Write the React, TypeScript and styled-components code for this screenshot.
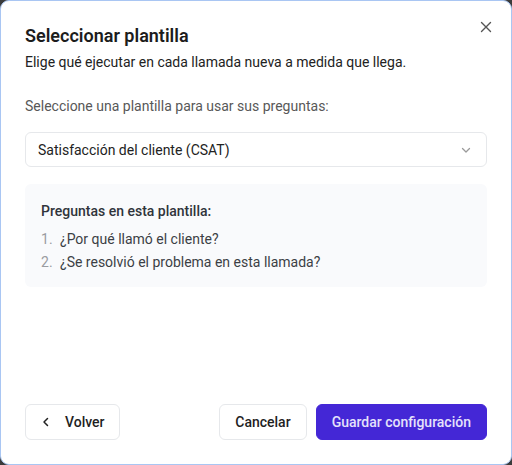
import styled, { createGlobalStyle } from 'styled-components';

const GlobalStyle = createGlobalStyle`
  html, body {
    margin: 0;
    padding: 0;
    background: #3b3b3b;
  }
  * {
    box-sizing: border-box;
  }
`;

const questions = ['¿Por qué llamó el cliente?', '¿Se resolvió el problema en esta llamada?'];

function App() {
  return (
    <>
      <GlobalStyle />
      <Dialog>
        <CloseButton aria-label="Cerrar">
          <svg width="12" height="12" viewBox="0 0 12 12" fill="none">
            <path d="M1.5 1.5l9 9M10.5 1.5l-9 9" stroke="#555" strokeWidth="1.4" strokeLinecap="round" />
          </svg>
        </CloseButton>
        <Title>Seleccionar plantilla</Title>
        <Subtitle>Elige qué ejecutar en cada llamada nueva a medida que llega.</Subtitle>

        <FieldLabel>Seleccione una plantilla para usar sus preguntas:</FieldLabel>
        <Select>
          <span>Satisfacción del cliente (CSAT)</span>
          <svg width="12" height="12" viewBox="0 0 12 12" fill="none">
            <path d="M2.5 4.5L6 8l3.5-3.5" stroke="#9a9a9a" strokeWidth="1.3" strokeLinecap="round" strokeLinejoin="round" />
          </svg>
        </Select>

        <QuestionsPanel>
          <PanelTitle>Preguntas en esta plantilla:</PanelTitle>
          <QuestionList>
            {questions.map((q, i) => (
              <QuestionItem key={q}>
                <Num>{i + 1}.</Num>
                <span>{q}</span>
              </QuestionItem>
            ))}
          </QuestionList>
        </QuestionsPanel>

        <Footer>
          <Button $back>
            <svg width="12" height="12" viewBox="0 0 12 12" fill="none">
              <path d="M7.5 2.5L4 6l3.5 3.5" stroke="#222" strokeWidth="1.5" strokeLinecap="round" strokeLinejoin="round" />
            </svg>
            Volver
          </Button>
          <Actions>
            <Button>Cancelar</Button>
            <Button $primary>Guardar configuración</Button>
          </Actions>
        </Footer>
      </Dialog>
    </>
  );
}

const Dialog = styled.div`
  position: relative;
  width: 512px;
  height: 465px;
  background: #ffffff;
  border: 1.5px solid #a9c6f3;
  border-radius: 9px;
  padding: 22px 24px 24px 24px;
  display: flex;
  flex-direction: column;
  font-family: Roboto, 'Noto Sans', sans-serif;
  color: #1f1f1f;
`;

const CloseButton = styled.button`
  position: absolute;
  top: 19px;
  right: 18px;
  width: 14px;
  height: 14px;
  padding: 0;
  border: none;
  background: none;
  display: flex;
  align-items: center;
  justify-content: center;
  cursor: pointer;
`;

const Title = styled.h2`
  margin: 0;
  font-size: 18px;
  line-height: 26px;
  font-weight: 600;
  color: #1c1c1c;
`;

const Subtitle = styled.p`
  margin: 3px 0 0;
  font-size: 14px;
  line-height: 20px;
  color: #222;
`;

const FieldLabel = styled.p`
  margin: 24px 0 0;
  font-size: 14px;
  line-height: 20px;
  color: #585858;
`;

const Select = styled.div`
  margin-top: 16px;
  height: 35px;
  border: 1px solid #e6e8eb;
  border-radius: 6px;
  padding: 0 14px 0 12px;
  display: flex;
  align-items: center;
  justify-content: space-between;
  font-size: 14px;
  color: #222;
`;

const QuestionsPanel = styled.div`
  margin-top: 17px;
  background: #f9fafc;
  border-radius: 6px;
  padding: 17px 16px 15px;
`;

const PanelTitle = styled.div`
  font-size: 14px;
  line-height: 20px;
  font-weight: 500;
  color: #30343b;
`;

const QuestionList = styled.ol`
  list-style: none;
  margin: 8px 0 0;
  padding: 0;
  display: flex;
  flex-direction: column;
  gap: 3px;
`;

const QuestionItem = styled.li`
  display: flex;
  gap: 6px;
  font-size: 14px;
  line-height: 20px;
  color: #3c3f45;
`;

const Num = styled.span`
  color: #9a9ca1;
  width: 13px;
`;

const Footer = styled.div`
  margin-top: auto;
  display: flex;
  justify-content: space-between;
  align-items: center;
`;

const Actions = styled.div`
  display: flex;
  gap: 9px;
`;

const Button = styled.button<{ $primary?: boolean; $back?: boolean }>`
  height: 36px;
  padding: 0 ${(p) => (p.$back ? '14px' : '15px')};
  border-radius: 6px;
  display: flex;
  align-items: center;
  gap: 13px;
  font-family: Roboto, 'Noto Sans', sans-serif;
  font-size: 14px;
  font-weight: 500;
  cursor: pointer;
  border: 1px solid ${(p) => (p.$primary ? '#4427d6' : '#e6e8eb')};
  background: ${(p) => (p.$primary ? '#4427d6' : '#ffffff')};
  color: ${(p) => (p.$primary ? '#e4e2fb' : '#1f1f1f')};
`;

export default App;
